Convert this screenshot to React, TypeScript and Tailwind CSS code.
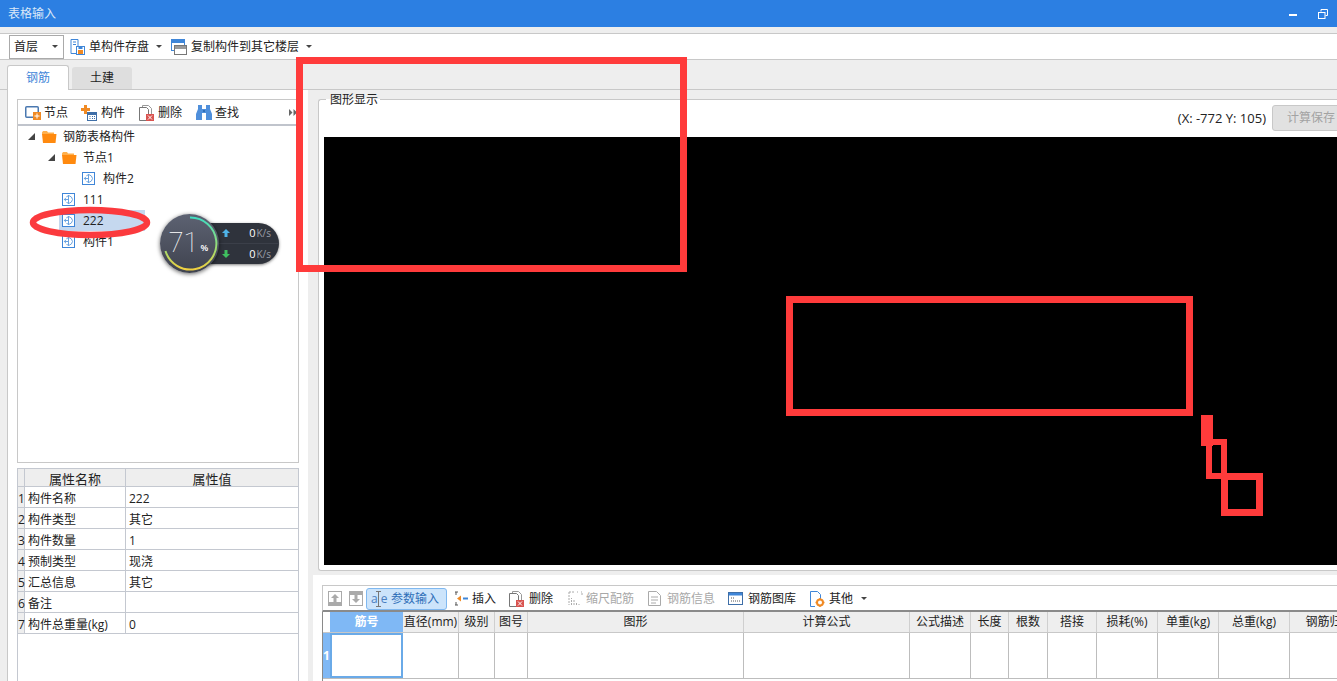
const Caret = () => (
  <svg width="6" height="3" viewBox="0 0 6 3" className="shrink-0">
    <path d="M0 0h6L3 3z" fill="#444" />
  </svg>
);

const SaveIcon = () => (
  <svg width="15" height="16" viewBox="0 0 15 16" fill="none" className="shrink-0">
    <path d="M1 .5h7v7H7v7H1z M3 3h3 M3 5.500h3" stroke="#3f86d8" />
    <rect x="6.500" y="7.500" width="8" height="8" fill="#fff" stroke="#3f86d8" />
    <rect x="8" y="11" width="5" height="4" fill="#f08a24" />
    <rect x="8.500" y="8" width="4" height="2" fill="#3f86d8" />
  </svg>
);

const CopyIcon = () => (
  <svg width="16" height="16" viewBox="0 0 16 16" fill="none" className="shrink-0">
    <rect x=".5" y=".5" width="13" height="11" fill="#fff" stroke="#3f86d8" />
    <rect x="1" y="1" width="12" height="3" fill="#3f86d8" />
    <rect x="3.500" y="6.500" width="12" height="9" fill="#fff" stroke="#777" />
    <rect x="4" y="7" width="11" height="3" fill="#999" />
  </svg>
);

const NodeAddIcon = () => (
  <svg width="16" height="15" viewBox="0 0 16 15" fill="none" className="shrink-0">
    <rect x=".75" y="1.750" width="12.500" height="10.500" rx="1" stroke="#4a78b0" strokeWidth="1.500" />
    <rect x="8" y="7" width="8" height="8" fill="#f08a24" />
    <path d="M12 8.500v5 M9.500 11h5" stroke="#fff" />
  </svg>
);

const ComponentAddIcon = () => (
  <svg width="16" height="16" viewBox="0 0 16 16" fill="none" className="shrink-0">
    <path d="M3 0h3v3h3v3H6v3H3V6H0V3h3z" fill="#f08a24" />
    <rect x="6.500" y="7.500" width="9" height="8" fill="#fff" stroke="#3f6fa8" />
    <rect x="7" y="8" width="8" height="2" fill="#3f6fa8" />
    <path d="M8.500 11.500h1 M11 11.500h1 M13 11.500h1 M8.500 13.500h1 M11 13.500h1 M13 13.500h1" stroke="#3f6fa8" />
  </svg>
);

const DeleteIcon = () => (
  <svg width="15" height="16" viewBox="0 0 15 16" fill="none" className="shrink-0">
    <path d="M3.500 2.500V.5h6l3 3V9" stroke="#999" />
    <path d="M.5 2.500h7l2 2V15.500H.5z" fill="#fff" stroke="#777" />
    <rect x="7" y="9" width="8" height="7" fill="#d9534f" />
    <path d="M9 10.500l4 4 M13 10.500l-4 4" stroke="#fff" />
  </svg>
);

const FindIcon = () => (
  <svg width="16" height="15" viewBox="0 0 16 15" className="shrink-0">
    <path d="M2 0h4v4h4V0h4v4l2 5v6H10V8H6v7H0V9l2-5z" fill="#4f8fdb" />
    <rect x="7" y="5" width="2" height="2" fill="#2f6fb8" />
  </svg>
);

const Folder = () => (
  <svg width="15" height="13" viewBox="0 0 15 13" className="shrink-0">
    <path d="M0 2.500 1 1h4l1 1.500h6v2H0z" fill="#ffb04d" />
    <path d="M0 4h14.500l-1 9H1z" fill="#ff8a0f" />
  </svg>
);

const TreeArrow = () => (
  <svg width="7" height="7" viewBox="0 0 7 7" className="shrink-0">
    <path d="M7 0v7H0z" fill="#444" />
  </svg>
);

const PartIcon = () => (
  <svg width="13" height="13" viewBox="0 0 13 13" fill="none" className="shrink-0">
    <rect x=".5" y=".5" width="12" height="12" fill="#fff" stroke="#3f86d8" />
    <path d="M4.500 3.500a3.700 3.700 0 1 1 0 6 M6.500 2v9 M2 6.500h4.500 M4 4.800 2.300 6.500 4 8.200" stroke="#6aa3e0" />
  </svg>
);

const TreeRow = ({ indent, label, folder, open, selected }: { indent: number; label: string; folder?: boolean; open?: boolean; selected?: boolean }) => (
  <div className="h-[21px] flex items-center" style={{ paddingLeft: indent }}>
    <div className="w-[11px] flex justify-start">{open && <TreeArrow />}</div>
    <div className={`h-[21px] flex items-center pl-[3px] ${selected ? "bg-[#c5d8ef] w-[86px]" : ""}`}>
      {folder ? <Folder /> : <PartIcon />}
      <span className={`whitespace-nowrap ${folder ? "ml-[6px]" : "ml-[8px]"}`}>{label}</span>
    </div>
  </div>
);

const ToolBtn = ({ icon, label, className = "" }: { icon: React.ReactNode; label: string; className?: string }) => (
  <div className={`flex items-center whitespace-nowrap ${className}`}>
    {icon}
    <span>{label}</span>
  </div>
);

const props = [
  ["构件名称", "222"],
  ["构件类型", "其它"],
  ["构件数量", "1"],
  ["预制类型", "现浇"],
  ["汇总信息", "其它"],
  ["备注", ""],
  ["构件总重量(kg)", "0"],
];

const gridHead = [
  "直径(mm)", "级别", "图号", "图形", "计算公式", "公式描述", "长度", "根数", "搭接", "损耗(%)", "单重(kg)", "总重(kg)", "钢筋归类",
];

const gridCols = "grid grid-cols-[7px_73px_56px_36px_33px_216px_166px_61px_38px_39px_49px_61px_61px_71px_80px]";

const MiniUp = () => (
  <svg width="14" height="15" viewBox="0 0 14 15" className="shrink-0">
    <rect x=".5" y=".5" width="13" height="14" fill="#fff" stroke="#aaa" />
    <rect x="0" y="11" width="14" height="4" fill="#aaa" />
    <path d="M7 3l4 4H8.500v4h-3V7H3z" fill="#aaa" />
  </svg>
);

const MiniDown = () => (
  <svg width="14" height="15" viewBox="0 0 14 15" className="shrink-0">
    <rect x=".5" y=".5" width="13" height="14" fill="#fff" stroke="#aaa" />
    <rect x="0" y="0" width="14" height="4" fill="#aaa" />
    <path d="M7 12l4-4H8.500V4h-3v4H3z" fill="#aaa" />
  </svg>
);

const InsertIcon = () => (
  <svg width="14" height="15" viewBox="0 0 14 15" fill="none" className="shrink-0">
    <path d="M1 1h3 M1 14h3 M2 1v3 M2 11v3" stroke="#555" />
    <path d="M7 4.500 3 7.500l4 3V6.500z" fill="#f08a24" />
    <path d="M9 7.500h5" stroke="#3f86d8" strokeWidth="2" />
  </svg>
);

const ScaleIcon = () => (
  <svg width="15" height="15" viewBox="0 0 15 15" fill="none" className="shrink-0">
    <path d="M1 1v13 M1 1h5 M9 1h1 M13 1h1 M3.500 14V7 M6 14V9 M8.500 14v-3 M11 14v-1 M14 2v3" stroke="#aaa" strokeDasharray="2 1" />
  </svg>
);

const InfoIcon = () => (
  <svg width="13" height="15" viewBox="0 0 13 15" fill="none" className="shrink-0">
    <path d="M.5.500h8l4 4v10H.5z M3 6h7 M3 9h7 M3 12h5" stroke="#aaa" />
  </svg>
);

const LibIcon = () => (
  <svg width="15" height="13" viewBox="0 0 15 13" fill="none" className="shrink-0">
    <rect x=".5" y=".5" width="14" height="12" fill="#fff" stroke="#3f6fa8" />
    <rect x="1" y="1" width="13" height="2.500" fill="#3f86d8" />
    <path d="M3 6h3 M3 9h9" stroke="#555" strokeDasharray="1 1" />
  </svg>
);

const OtherIcon = () => (
  <svg width="15" height="16" viewBox="0 0 15 16" fill="none" className="shrink-0">
    <path d="M.5.500h7l3 3V9 M.5.500V15.500H5" stroke="#3f86d8" />
    <circle cx="10" cy="11.500" r="3" stroke="#f08a24" strokeWidth="2" />
    <path d="M10 7v1.500 M10 14.500V16 M5.500 11.500H7 M13 11.500h1.500" stroke="#f08a24" strokeWidth="1.500" />
  </svg>
);

// network speed widget that floats over the tree
const SpeedWidget = () => (
  <div className="absolute left-[160px] top-[214px] w-[120px] h-[59px] flex items-center">
    <div className="absolute left-[38px] top-[9px] w-[81px] h-[41px] rounded-r-[21px] bg-[#2f333c] shadow-[0_1px_3px_rgba(0,0,0,0.5)] text-[#d8dbe0] text-[10px]">
      <div className="h-[21px] flex items-center justify-end pr-[8px] border-b border-[#3b3f49] gap-px">
        <span className="text-[11px] text-white">0</span>
        <span className="text-[#9a9ea8]">K/s</span>
      </div>
      <div className="h-[20px] flex items-center justify-end pr-[8px] gap-px">
        <span className="text-[11px] text-white">0</span>
        <span className="text-[#9a9ea8]">K/s</span>
      </div>
      <svg width="8" height="8" viewBox="0 0 8 8" className="absolute left-[24px] top-[6px]">
        <path d="M4 0l4 4H5.500v4h-3V4H0z" fill="#4fb3e8" />
      </svg>
      <svg width="8" height="8" viewBox="0 0 8 8" className="absolute left-[24px] top-[27px]">
        <path d="M4 8l4-4H5.500V0h-3v4H0z" fill="#3fbf5f" />
      </svg>
    </div>
    <div className="relative w-[59px] h-[59px] rounded-full bg-[linear-gradient(#5d6272,#3f434f)] shadow-[0_1px_4px_rgba(0,0,0,0.6)] text-white flex items-center justify-center">
      <svg width="59" height="59" viewBox="0 0 59 59" fill="none" className="absolute inset-0">
        <defs>
          <linearGradient id="arc" x1="0" y1="0" x2="0" y2="1">
            <stop offset="0" stopColor="#3fdcc0" />
            <stop offset="0.6" stopColor="#9fdc70" />
            <stop offset="1" stopColor="#f0d040" />
          </linearGradient>
        </defs>
        <path d="M30 3.500A26 26 0 1 1 5.500 37" stroke="url(#arc)" strokeWidth="2" />
      </svg>
      <span className="text-[27px] font-thin leading-none [font-family:'Roboto',sans-serif] -ml-[2px]">71</span>
      <span className="text-[9px] mt-[8px] ml-[2px] font-semibold">%</span>
    </div>
  </div>
);

export default function App() {
  return (
    <div className="relative w-[1337px] h-[681px] overflow-hidden flex flex-col bg-[#eeeeee] text-[12px] text-[#222] [font-family:'Open_Sans','Noto_Sans_CJK_SC',sans-serif]">
      {/* title bar */}
      <div className="h-[27px] shrink-0 bg-[#2c7fe2] flex items-center justify-between pl-2 pr-[9px] text-[#dbe8f8]">
        <span>表格输入</span>
        <div className="flex items-center gap-[21px]">
          <div className="w-[8px] h-[2px] bg-white mt-[2px]" />
          <svg width="10" height="10" viewBox="0 0 10 10" fill="none">
            <path d="M3 2.500V.5h6.500v6H7.500" stroke="#fff" />
            <rect x=".5" y="3.500" width="6.500" height="6" stroke="#fff" />
          </svg>
        </div>
      </div>
      <div className="h-[6px] shrink-0" />

      {/* top toolbar */}
      <div className="h-[27px] shrink-0 bg-white border-y border-[#c8c8c8] flex items-center pl-[9px]">
        <div className="w-[55px] h-[24px] border border-[#aaa] flex items-center justify-between pl-[4px] pr-[5px]">
          <span>首层</span>
          <Caret />
        </div>
        <ToolBtn className="ml-[6px] gap-[4px]" icon={<SaveIcon />} label="单构件存盘" />
        <div className="ml-[7px]"><Caret /></div>
        <ToolBtn className="ml-[9px] gap-[4px]" icon={<CopyIcon />} label="复制构件到其它楼层" />
        <div className="ml-[7px]"><Caret /></div>
      </div>

      {/* tabs */}
      <div className="h-[30px] shrink-0 flex items-end pl-[7px] gap-[3px] border-b border-[#c8c8c8]">
        <div className="w-[62px] h-[25px] -mb-px bg-white border border-b-0 border-[#c8c8c8] rounded-t-[3px] flex items-center justify-center text-[#3f86d8] relative">钢筋</div>
        <div className="w-[60px] h-[22px] bg-[#dedede] rounded-t-[3px] flex items-center justify-center">土建</div>
      </div>

      <div className="flex-1 min-h-0 flex">
        {/* left side */}
        <div className="w-[308px] shrink-0 pl-[7px]">
          <div className="h-full bg-white border-l border-[#c8c8c8] pt-[9px] pl-[9px] pr-[9px] flex flex-col">
            <div className="flex-none h-[364px] border border-[#c8c8c8] flex flex-col">
              <div className="h-[26px] shrink-0 border-b-2 border-[#c0c4cc] flex items-center pl-[7px] pt-px">
                <ToolBtn icon={<NodeAddIcon />} label="节点" className="gap-[3px]" />
                <ToolBtn icon={<ComponentAddIcon />} label="构件" className="ml-[13px] gap-[4px]" />
                <ToolBtn icon={<DeleteIcon />} label="删除" className="ml-[14px] gap-[4px]" />
                <ToolBtn icon={<FindIcon />} label="查找" className="ml-[14px] gap-[3px]" />
                <svg width="8" height="7" viewBox="0 0 8 7" className="ml-auto mr-[1px] shrink-0">
                  <path d="M0 0l3.500 3.500L0 7z M4.500 0 8 3.500 4.500 7z" fill="#666" />
                </svg>
              </div>
              <div className="pl-[10px]">
                <TreeRow indent={0} label="钢筋表格构件" folder open />
                <TreeRow indent={20} label="节点1" folder open />
                <TreeRow indent={40} label="构件2" />
                <TreeRow indent={20} label="111" />
                <TreeRow indent={20} label="222" selected />
                <TreeRow indent={20} label="构件1" />
              </div>
            </div>

            {/* property table */}
            <div className="mt-[5px] flex-1 border-x border-t border-[#c4c8d0] text-[12px]">
              <div className="flex h-[18px] bg-[#eeeeee] border-b border-[#c4c8d0] text-[13px] leading-[20px] text-center">
                <div className="w-[7px] border-r border-[#c4c8d0]" />
                <div className="w-[101px] border-r border-[#c4c8d0]">属性名称</div>
                <div className="flex-1">属性值</div>
              </div>
              {props.map(([name, value], i) => (
                <div key={name} className="flex h-[21px] border-b border-[#c4c8d0] leading-[23px]">
                  <div className="w-[7px] bg-[#eeeeee] border-r border-[#c4c8d0] text-center">{i + 1}</div>
                  <div className="w-[101px] border-r border-[#c4c8d0] pl-[3px] whitespace-nowrap">{name}</div>
                  <div className="flex-1 pl-[3px]">{value}</div>
                </div>
              ))}
            </div>
          </div>
        </div>

        {/* right side */}
        <div className="flex-1 min-w-0 flex flex-col">
          <div className="h-[485px] shrink-0 pl-[10px] pt-[9px]">
            <div className="relative h-[472px] bg-white border-l border-y border-[#c8c8c8] rounded-l-[3px] flex flex-col">
              <div className="absolute left-[7px] -top-[9px] pl-[4px] pr-[2px] bg-[linear-gradient(#eeeeee_50%,#ffffff_50%)] leading-[17px] text-[12px]">图形显示</div>
              <div className="h-[37px] shrink-0 flex items-center justify-end gap-[6px] -mr-[13px]">
                <span className="whitespace-nowrap text-[13px]">(X: -772 Y: 105)</span>
                <div className="w-[78px] h-[26px] bg-[#e1e1e1] border border-[#c8c8c8] rounded-[3px] flex items-center justify-center text-[#a3a3a3] mt-[-1px]">计算保存</div>
              </div>
              <div className="ml-[5px] h-[428px] bg-black shrink-0" />
            </div>
          </div>

          {/* bottom rebar grid */}
          <div className="flex-1 min-h-0 ml-[5px] bg-white pl-[9px] pt-[10px] flex flex-col">
            <div className="h-[27px] shrink-0 border-t border-l border-[#c8c8c8] border-b-2 border-b-[#8a8a8a] flex items-center pl-[5px] pt-px">
              <MiniUp />
              <div className="ml-[7px]"><MiniDown /></div>
              <div className="ml-[3px] h-[22px] w-[81px] bg-[#cce4fb] border border-[#7fb8f0] rounded-[3px] flex items-center pl-[4px] text-[#2f6fb8] whitespace-nowrap">
                <span className="relative w-[20px] shrink-0 text-[#4a7fc0] tracking-[3px] leading-none">
                  ae
                  <svg width="5" height="16" viewBox="0 0 5 16" fill="none" className="absolute left-[5px] -top-[2px]">
                    <path d="M0 .5h5 M0 15.500h5 M2.500 .5v15" stroke="#777" />
                  </svg>
                </span>
                <span>参数输入</span>
              </div>
              <ToolBtn className="ml-[7px] gap-[4px]" icon={<InsertIcon />} label="插入" />
              <ToolBtn className="ml-[13px] gap-[5px]" icon={<DeleteIcon />} label="删除" />
              <ToolBtn className="ml-[15px] gap-[3px] text-[#a8a8a8]" icon={<ScaleIcon />} label="缩尺配筋" />
              <ToolBtn className="ml-[14px] gap-[6px] text-[#a8a8a8]" icon={<InfoIcon />} label="钢筋信息" />
              <ToolBtn className="ml-[13px] gap-[5px]" icon={<LibIcon />} label="钢筋图库" />
              <ToolBtn className="ml-[14px] gap-[4px]" icon={<OtherIcon />} label="其他" />
              <div className="ml-[8px]"><Caret /></div>
            </div>
            <div className="border-l border-[#8a8a8a] flex-1 min-w-[1100px]">
              <div className={`${gridCols} h-[21px] bg-[#eeeeee] border-b border-[#c8c8c8] leading-[20px] text-center`}>
                <div className="bg-white" />
                <div className="bg-[#7fb8f5] text-white font-semibold">筋号</div>
                {gridHead.map((h) => (
                  <div key={h} className="border-r border-[#cfcfcf] whitespace-nowrap overflow-hidden">{h}</div>
                ))}
              </div>
              <div className={`${gridCols} h-[46px] border-b border-[#bdbdbd]`}>
                <div className="bg-[#7fb8f5] text-white font-bold flex items-center justify-center">1</div>
                <div className="border-2 border-[#6aaae8]" />
                {gridHead.map((h) => (
                  <div key={h} className="border-r border-[#bdbdbd]" />
                ))}
              </div>
            </div>
          </div>
        </div>
      </div>

      <SpeedWidget />

      {/* red annotations */}
      <svg width="124" height="34" viewBox="0 0 124 34" fill="none" className="absolute left-[28px] top-[206px]">
        <ellipse cx="62" cy="16.500" rx="57" ry="12.500" stroke="#fb3a3e" strokeWidth="6.500" />
      </svg>
      <div className="absolute left-[296px] top-[57px] w-[391px] h-[215px] border-[7px] border-[#ff3b3b]" />
      <div className="absolute left-[786px] top-[296px] w-[407px] h-[120px] border-[7px] border-[#ff3b3b]" />
      <div className="absolute left-[1201px] top-[415px] w-[12px] h-[31px] bg-[#ff3b3b]" />
      <div className="absolute left-[1206px] top-[439px] w-[21px] h-[40px] border-[6px] border-[#ff3b3b]" />
      <div className="absolute left-[1221px] top-[473px] w-[42px] h-[43px] border-[7px] border-[#ff3b3b]" />
    </div>
  );
}
